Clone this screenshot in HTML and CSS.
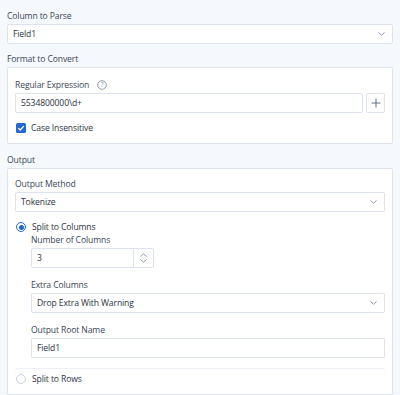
FILE: index.html
```html
<!DOCTYPE html>
<html>
<head>
<meta charset="utf-8">
<link rel="stylesheet" href="styles.css">
</head>
<body>
<div class="panel">
  <div class="label">Column to Parse</div>
  <div class="select"><span>Field1</span><svg class="chev" width="7" height="4" viewBox="0 0 7 4"><path d="M0.5 0.5 L3.5 3.2 L6.5 0.5" fill="none" stroke="#8a97b0" stroke-width="1"/></svg></div>

  <div class="label sec">Format to Convert</div>
  <div class="box fmt">
    <div class="label row">Regular Expression
      <svg class="help" width="10" height="10" viewBox="0 0 10 10"><circle cx="5" cy="5" r="4.3" fill="none" stroke="#8593ad" stroke-width="0.9"/><text x="5" y="7.3" text-anchor="middle" font-size="6.5" fill="#8593ad" font-family="Open Sans, sans-serif">?</text></svg>
    </div>
    <div class="inrow">
      <div class="input grow">5534800000\d+</div>
      <div class="plus"><svg width="10" height="10" viewBox="0 0 10 10"><path d="M5 0.5 V9.5 M0.5 5 H9.5" stroke="#66718a" stroke-width="1"/></svg></div>
    </div>
    <div class="check">
      <span class="cb"><svg width="8" height="8" viewBox="0 0 8 8"><path d="M1.3 4.1 L3.2 6 L6.8 2.1" fill="none" stroke="#fff" stroke-width="1.3"/></svg></span>
      <span>Case Insensitive</span>
    </div>
  </div>

  <div class="label sec2">Output</div>
  <div class="box out">
    <div class="label">Output Method</div>
    <div class="select"><span>Tokenize</span><svg class="chev" width="7" height="4" viewBox="0 0 7 4"><path d="M0.5 0.5 L3.5 3.2 L6.5 0.5" fill="none" stroke="#8a97b0" stroke-width="1"/></svg></div>

    <div class="radio r1"><span class="rb on"></span><span>Split to Columns</span></div>
    <div class="indent">
      <div class="label l1">Number of Columns</div>
      <div class="num">
        <span class="nv">3</span>
        <span class="spin">
          <svg width="7" height="4" viewBox="0 0 7 4"><path d="M0.5 3.5 L3.5 0.8 L6.5 3.5" fill="none" stroke="#8a97b0" stroke-width="1"/></svg>
          <svg width="7" height="4" viewBox="0 0 7 4"><path d="M0.5 0.5 L3.5 3.2 L6.5 0.5" fill="none" stroke="#8a97b0" stroke-width="1"/></svg>
        </span>
      </div>
      <div class="label l2">Extra Columns</div>
      <div class="select"><span>Drop Extra With Warning</span><svg class="chev" width="7" height="4" viewBox="0 0 7 4"><path d="M0.5 0.5 L3.5 3.2 L6.5 0.5" fill="none" stroke="#8a97b0" stroke-width="1"/></svg></div>
      <div class="label l2">Output Root Name</div>
      <div class="input">Field1</div>
    </div>
    <div class="sep"></div>
    <div class="radio r2"><span class="rb"></span><span>Split to Rows</span></div>
  </div>
</div>
</body>
</html>
```

FILE: styles.css
```css
* { box-sizing: border-box; }
html, body { margin: 0; padding: 0; }
body {
  background: #f5f8fd;
  font-family: "Open Sans", "Noto Sans", sans-serif;
  font-size: 8.6px;
  letter-spacing: -0.12px;
  color: #2e3846;
  width: 400px;
  height: 395px;
  overflow: hidden;
}
.panel { padding: 10px 7px 0 7px; }
.label {
  height: 12px;
  line-height: 12px;
  margin-bottom: 2px;
  color: #3a4658;
  white-space: nowrap;
}
.label.sec { margin-top: 9px; }
.label.sec2 { margin-top: 10px; }
.select, .input {
  height: 20px;
  border: 1px solid #dce2ee;
  border-radius: 2px;
  background: #fff;
  display: flex;
  align-items: center;
  justify-content: space-between;
  padding: 0 7px 0 5px;
  color: #2b3442;
}
.chev { display: block; }
.box {
  background: #fff;
  border: 1px solid #dde3ef;
  border-radius: 2px;
  padding: 0 7px;
}
.fmt { padding-top: 11px; padding-bottom: 9px; }
.row { display: flex; align-items: center; gap: 8px; }
.help { display: block; margin-top: -1px; }
.inrow { display: flex; gap: 3px; }
.grow { flex: 1; }
.plus {
  width: 19px; height: 20px;
  border: 1px solid #dce2ee;
  border-radius: 2px;
  display: flex; align-items: center; justify-content: center;
  background: #fff;
}
.plus svg { display: block; }
.check {
  margin-top: 8px;
  height: 13px;
  display: flex; align-items: center; gap: 5px;
  padding-left: 1px;
  color: #2b3442;
}
.cb {
  width: 10px; height: 10px;
  background: #2468d4;
  border-radius: 1.5px;
  display: flex; align-items: center; justify-content: center;
}
.cb svg { display: block; }
.out { padding-top: 9px; padding-bottom: 9px; }
.radio {
  height: 12px;
  display: flex; align-items: center; gap: 6px;
  padding-left: 1px;
  color: #2b3442;
}
.r1 { margin-top: 9px; }
.rb {
  width: 10px; height: 10px;
  border-radius: 50%;
  border: 1px solid #c9d1e0;
  background: #fff;
  position: relative;
}
.rb.on { border-color: #2468d4; }
.rb.on::after {
  content: "";
  position: absolute;
  left: 1.5px; top: 1.5px;
  width: 5px; height: 5px;
  border-radius: 50%;
  background: #2468d4;
}
.indent { padding-left: 16px; }
.l1 { margin-top: 1px; }
.l2 { margin-top: 11px; }
.num {
  width: 123px; height: 20px;
  border: 1px solid #dce2ee;
  border-radius: 2px;
  display: flex;
  background: #fff;
}
.nv { flex: 1; display: flex; align-items: center; padding-left: 5px; color: #2b3442; }
.spin {
  width: 20px;
  border-left: 1px solid #dce2ee;
  display: flex; flex-direction: column; align-items: center; justify-content: space-around;
  padding: 3px 0;
}
.spin svg { display: block; }
.sep {
  height: 1px;
  background: #edf0f6;
  margin-top: 10px;
}
.r2 { margin-top: 4px; }
```
